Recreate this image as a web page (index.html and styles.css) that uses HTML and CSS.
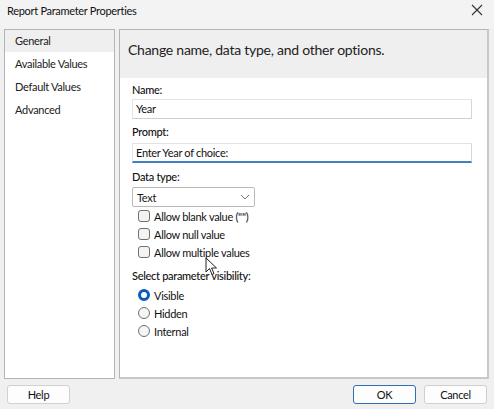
FILE: index.html
```html
<!DOCTYPE html>
<html>
<head>
<meta charset="utf-8">
<link rel="stylesheet" href="styles.css">
</head>
<body>
<div class="window">
  <div class="titlebar">
    <span class="title">Report Parameter Properties</span>
    <svg class="close" width="12" height="12" viewBox="0 0 12 12"><path d="M1 1 L11 11 M11 1 L1 11" stroke="#333" stroke-width="1.1" fill="none"/></svg>
  </div>
  <div class="main">
    <div class="nav">
      <div class="nav-item active">General</div>
      <div class="nav-item">Available Values</div>
      <div class="nav-item">Default Values</div>
      <div class="nav-item">Advanced</div>
    </div>
    <div class="content">
      <div class="header">Change name, data type, and other options.</div>
      <div class="form">
        <div class="label l-name">Name:</div>
        <div class="input">Year</div>
        <div class="label l-prompt">Prompt:</div>
        <div class="input focused">Enter Year of choice:</div>
        <div class="label l-type">Data type:</div>
        <div class="select"><span>Text</span>
          <svg width="10" height="6" viewBox="0 0 10 6"><path d="M1 1 L5 5 L9 1" stroke="#777" stroke-width="1" fill="none"/></svg>
        </div>
        <div class="checks">
          <div class="check"><span class="box"></span>Allow blank value ("")</div>
          <div class="check"><span class="box"></span>Allow null value</div>
          <div class="check"><span class="box"></span>Allow multiple values</div>
        </div>
        <div class="label l-vis">Select parameter visibility:</div>
        <div class="radios">
          <div class="radio"><span class="dot on"></span>Visible</div>
          <div class="radio"><span class="dot"></span>Hidden</div>
          <div class="radio"><span class="dot"></span>Internal</div>
        </div>
      </div>
    </div>
  </div>
  <div class="buttons">
    <button class="btn help">Help</button>
    <div class="right-btns">
      <button class="btn ok">OK</button>
      <button class="btn">Cancel</button>
    </div>
  </div>
  <svg class="cursor" width="14" height="20" viewBox="0 0 14 20"><path d="M1 1 L1 15 L4.5 11.5 L7 17.5 L9 16.6 L6.6 11 L11.5 11 Z" fill="#fff" stroke="#222" stroke-width="1" stroke-linejoin="round"/></svg>
</div>
</body>
</html>
```
FILE: styles.css
```css
* { box-sizing: border-box; }
html, body { margin: 0; padding: 0; }
body {
  width: 494px;
  height: 409px;
  background: #f0f0f0;
  font-family: Lato, "Noto Sans", sans-serif;
  font-size: 11px;
  letter-spacing: -0.3px;
  color: #1a1a1a;
  overflow: hidden;
}
.window { position: relative; width: 494px; height: 409px; background: #f0f0f0; }
.titlebar {
  height: 29px;
  display: flex;
  align-items: center;
  justify-content: space-between;
  padding: 0 11px 9px 7px;
  background: #f3f3f3;
}
.title { font-size: 11px; color: #111; }
.main {
  display: flex;
  gap: 4px;
  padding: 0 5px 0 4px;
  height: 350px;
}
.nav {
  width: 111px;
  background: #fff;
  border: 1px solid #b4b4b4;
}
.nav-item {
  height: 23px;
  line-height: 23px;
  padding-left: 10px;
  color: #222;
}
.nav-item.active { background: #efefef; height: 22px; line-height: 21px; }
.content {
  flex: 1;
  background: #fff;
  border: 1px solid #b4b4b4;
  border-right: 2px solid #c8c8c8;
  border-bottom: 2px solid #c8c8c8;
}
.header {
  height: 48px;
  background: #efefef;
  font-size: 14px;
  letter-spacing: -0.25px;
  line-height: 40px;
  padding-left: 8px;
  color: #222;
}
.form { padding: 0 15px 0 12px; }
.label { height: 16px; line-height: 16px; color: #111; font-weight: 500; }
.l-name { margin-top: 4px; }
.l-prompt { margin-top: 5px; }
.l-type { margin-top: 6px; }
.l-vis { margin-top: 7px; }
.input {
  margin-top: 1px;
  height: 20px;
  line-height: 18px;
  border: 1px solid #e3e3e3;
  border-right-color: #d6d6d6;
  border-bottom-color: #cfcfcf;
  padding-left: 3px;
  color: #111;
  background: #fff;
}
.input.focused { margin-top: 3px; border-bottom: 2px solid #3f81c4; }
.select {
  margin-top: 2px;
  width: 123px;
  height: 20px;
  border: 1px solid #b9b9b9;
  border-radius: 2px;
  display: flex;
  align-items: center;
  justify-content: space-between;
  padding: 0 4px 0 4px;
}
.checks { display: flex; flex-direction: column; }
.check, .radio {
  height: 18px;
  display: flex;
  align-items: center;
  gap: 4px;
  padding-left: 6px;
  color: #111;
}
.box {
  width: 12px;
  height: 12px;
  border: 1px solid #707070;
  border-radius: 3px;
  background: #f3f3f3;
}
.radios { margin-top: 2px; display: flex; flex-direction: column; }
.dot {
  width: 12px;
  height: 12px;
  border: 1px solid #707070;
  border-radius: 50%;
  background: #f5f5f5;
}
.dot.on {
  border: 3.5px solid #0a5cb8;
  background: #fff;
}
.buttons {
  display: flex;
  justify-content: space-between;
  padding: 6px 7px 0 7px;
}
.right-btns { display: flex; gap: 8px; }
.btn {
  height: 19px;
  width: 63px;
  font-family: inherit;
  font-size: 11px;
  letter-spacing: -0.3px;
  background: #fdfdfd;
  border: 1px solid #d0d0d0;
  border-radius: 3px;
  color: #111;
  padding: 0;
}
.btn.ok { border-color: #2f6fb4; }
.cursor { position: absolute; left: 205px; top: 257px; }
.close { display: block; }
```
